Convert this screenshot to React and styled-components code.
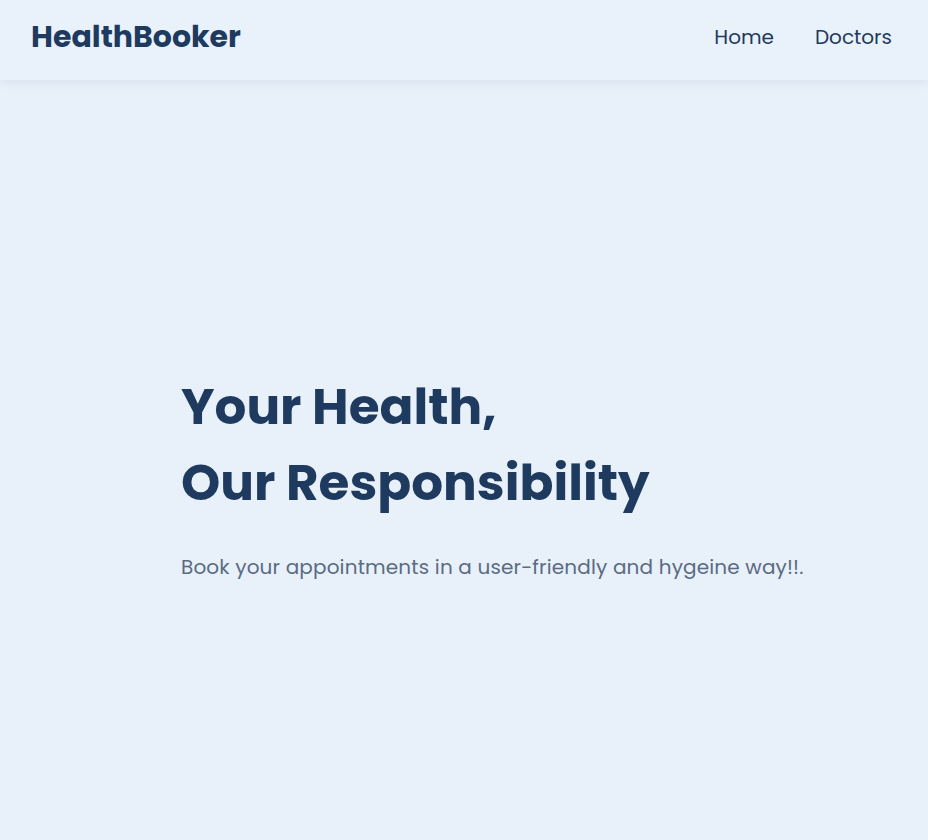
import React from 'react';
import styled, { createGlobalStyle } from 'styled-components';

const GlobalStyle = createGlobalStyle`
  html, body {
    margin: 0;
    padding: 0;
    background: #e8f0fa;
    font-family: "Poppins", "Inter", "Open Sans", sans-serif;
  }
`;

const Page = styled.div`
  min-height: 840px;
  display: flex;
  flex-direction: column;
  background: #e8f0fa;
`;

const Header = styled.header`
  height: 80px;
  box-sizing: border-box;
  display: flex;
  align-items: center;
  justify-content: space-between;
  padding: 0 36px 6px 31px;
  background: #e9f1fb;
  box-shadow: 0 2px 10px rgba(30, 58, 95, 0.08);
`;

const Logo = styled.div`
  font-size: 30px;
  font-weight: 700;
  color: #1e3a5f;
`;

const Nav = styled.nav`
  display: flex;
  gap: 41px;
`;

const NavLink = styled.a`
  font-size: 20px;
  color: #1e3a5f;
  text-decoration: none;
`;

const Hero = styled.section`
  flex: 1;
  display: flex;
  flex-direction: column;
  justify-content: center;
  padding: 30px 0 0 181px;
`;

const Title = styled.h1`
  margin: 0;
  font-size: 50px;
  line-height: 76px;
  font-weight: 700;
  color: #1e3a5f;
`;

const Subtitle = styled.p`
  margin: 31px 0 0;
  font-size: 20px;
  letter-spacing: 0.15px;
  color: #5a6b82;
`;

export default function App() {
  return (
    <Page>
      <GlobalStyle />
      <Header>
        <Logo>HealthBooker</Logo>
        <Nav>
          <NavLink href="#">Home</NavLink>
          <NavLink href="#">Doctors</NavLink>
        </Nav>
      </Header>
      <Hero>
        <Title>
          Your Health,
          <br />
          Our Responsibility
        </Title>
        <Subtitle>Book your appointments in a user-friendly and hygeine way!!.</Subtitle>
      </Hero>
    </Page>
  );
}
